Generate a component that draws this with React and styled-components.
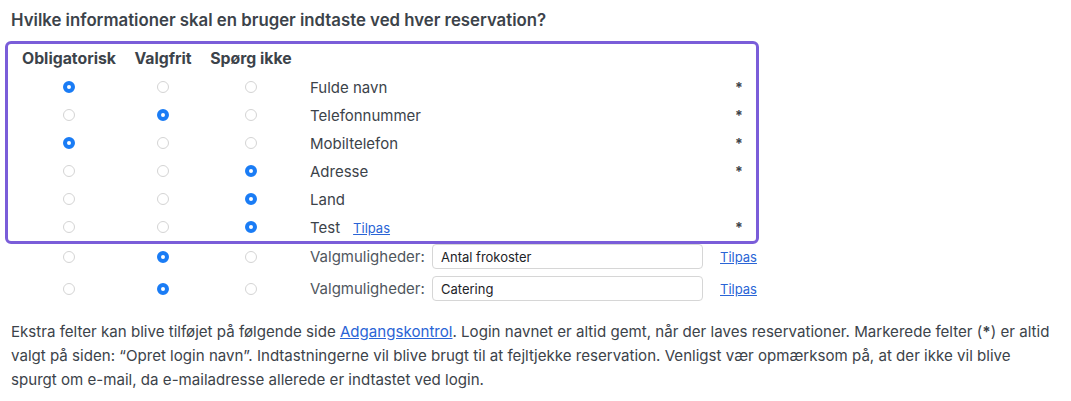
import React from "react";
import styled, { createGlobalStyle } from "styled-components";

const GlobalStyle = createGlobalStyle`
  body {
    margin: 0;
    background: #fff;
    font-family: Inter, "Noto Sans", sans-serif;
    color: #3c434a;
  }
`;

const fields = [
  { name: "Fulde navn", value: 0, star: true },
  { name: "Telefonnummer", value: 1, star: true },
  { name: "Mobiltelefon", value: 0, star: true },
  { name: "Adresse", value: 2, star: true },
  { name: "Land", value: 2, star: false },
  { name: "Test", value: 2, star: true, custom: true },
];

const options = [
  { text: "Antal frokoster", value: 1 },
  { text: "Catering", value: 1 },
];

function App() {
  return (
    <Page>
      <GlobalStyle />
      <Heading>Hvilke informationer skal en bruger indtaste ved hver reservation?</Heading>
      <Box>
        <Row header>
          <HeadCell>Obligatorisk</HeadCell>
          <HeadCell>Valgfrit</HeadCell>
          <HeadCell>Spørg ikke</HeadCell>
          <span />
          <span />
        </Row>
        {fields.map((f) => (
          <Row key={f.name}>
            {[0, 1, 2].map((i) => (
              <Cell key={i}>
                <Radio checked={f.value === i} />
              </Cell>
            ))}
            <Label>
              {f.name}
              {f.custom && <SmallLink href="#">Tilpas</SmallLink>}
            </Label>
            <Star>{f.star ? "*" : ""}</Star>
          </Row>
        ))}
      </Box>
      <Extra>
        {options.map((o) => (
          <OptionRow key={o.text}>
            {[0, 1, 2].map((i) => (
              <Cell key={i}>
                <Radio checked={o.value === i} />
              </Cell>
            ))}
            <OptionLabel>Valgmuligheder:</OptionLabel>
            <Input defaultValue={o.text} />
            <SmallLink href="#">Tilpas</SmallLink>
          </OptionRow>
        ))}
      </Extra>
      <Note>
        Ekstra felter kan blive tilføjet på følgende side <Link href="#">Adgangskontrol</Link>. Login navnet er altid gemt, når der laves reservationer. Markerede felter (<b>*</b>) er altid valgt på siden: “Opret login navn”. Indtastningerne vil blive brugt til at fejltjekke reservation. Venligst vær opmærksom på, at der ikke vil blive
        <br />
        spurgt om e-mail, da e-mailadresse allerede er indtastet ved login.
      </Note>
    </Page>
  );
}

export default App;

const Page = styled.div`
  padding: 10px 5px 0 5px;
  width: 1061px;
`;

const Heading = styled.h3`
  margin: 0 0 11px 6px;
  font-size: 16.8px;
  font-weight: 600;
  line-height: 20px;
  color: #3c434a;
`;

const Box = styled.div`
  width: 748px;
  border: 3px solid #7a5dd9;
  border-radius: 6px;
  padding: 0;
`;

const Row = styled.div`
  display: grid;
  grid-template-columns: 108px 80px 96px 1fr 21px;
  align-items: center;
  height: ${({ header }) => (header ? "29px" : "28px")};
  padding-left: 7px;
`;

const HeadCell = styled.div`
  text-align: center;
  font-size: 15.8px;
  font-weight: 700;
  color: #3c434a;
`;

const Cell = styled.div`
  display: flex;
  justify-content: center;
  align-items: center;
`;

const Radio = styled.span`
  display: inline-block;
  box-sizing: border-box;
  width: 12px;
  height: 12px;
  border-radius: 50%;
  border: ${({ checked }) => (checked ? "4px solid #1a7cf5" : "1px solid #d4d4d4")};
  background: #fff;
`;

const Label = styled.div`
  padding-left: 11px;
  font-size: 15px;
  color: #3c434a;
`;

const Star = styled.div`
  font-size: 14px;
  font-weight: 700;
  color: #3c434a;
`;

const SmallLink = styled.a`
  margin-left: 13px;
  font-size: 13px;
  color: #2a64d6;
  text-decoration: underline;
`;

const Extra = styled.div`
  padding: 0 3px;
  display: flex;
  flex-direction: column;
  gap: 7px;
`;

const OptionRow = styled.div`
  display: grid;
  grid-template-columns: 108px 80px 96px 133px 271px auto;
  justify-content: start;
  align-items: center;
  height: 25px;
  padding-left: 7px;

  ${SmallLink} {
    margin-left: 17px;
  }
`;

const OptionLabel = styled.div`
  padding-left: 11px;
  font-size: 15px;
  color: #50575e;
  white-space: nowrap;
`;

const Input = styled.input`
  box-sizing: border-box;
  width: 271px;
  height: 25px;
  border: 1px solid #d6d6d6;
  border-radius: 4px;
  padding: 0 8px;
  font-family: Inter, "Noto Sans", sans-serif;
  font-size: 13px;
  color: #1d2327;
  outline: none;
`;

const Note = styled.p`
  margin: 19px 0 0 6px;
  font-size: 15.1px;
  line-height: 24px;
  color: #3c434a;
`;

const Link = styled.a`
  color: #2a64d6;
  text-decoration: underline;
`;
